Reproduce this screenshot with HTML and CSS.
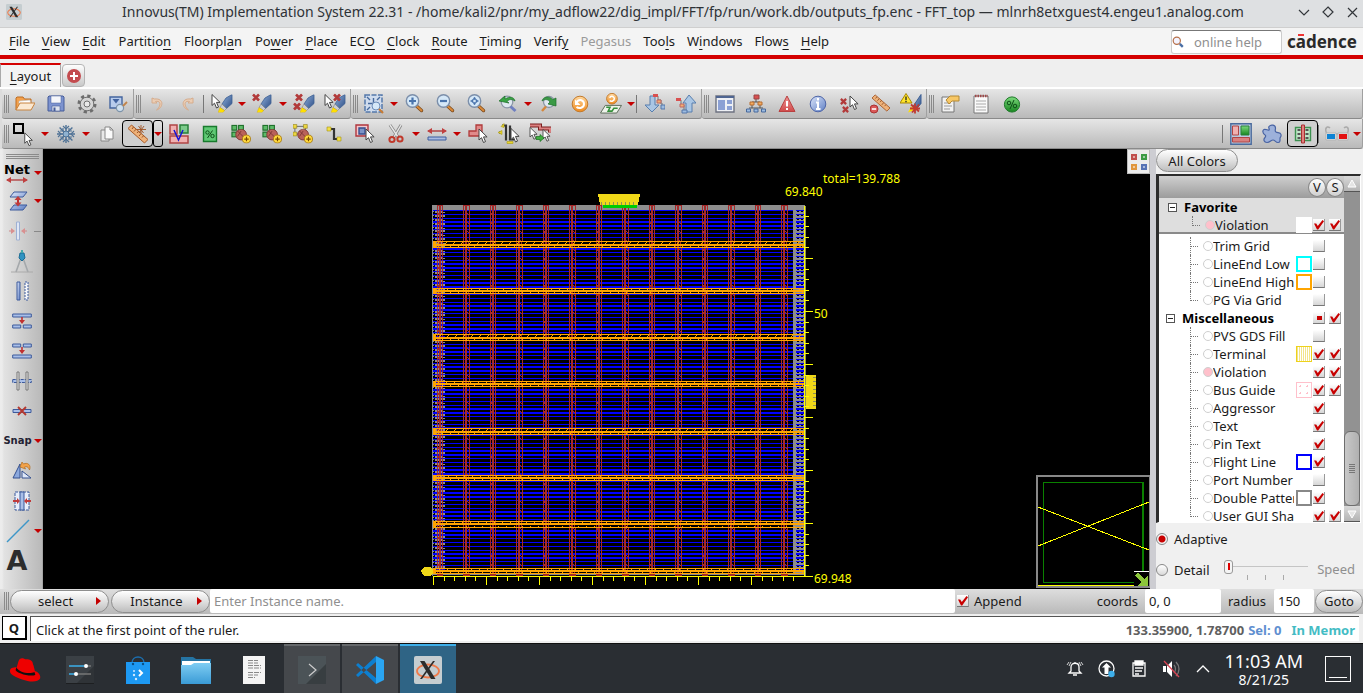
FILE: index.html
```html
<!DOCTYPE html>
<html lang="en">
<head>
<meta charset="utf-8">
<title>Innovus(TM) Implementation System 22.31</title>
<link rel="stylesheet" href="styles.css">
</head>
<body>
<svg class="sprite" aria-hidden="true">
  <defs>
    <linearGradient id="gBlue" x1="0" y1="0" x2="1" y2="1"><stop offset="0" stop-color="#dce6fa"/><stop offset="1" stop-color="#5f7fc4"/></linearGradient>
    <linearGradient id="gPen" x1="0" y1="0" x2="1" y2="1"><stop offset="0" stop-color="#8fb0dc"/><stop offset="1" stop-color="#2f4f86"/></linearGradient>
    <linearGradient id="gOrange" x1="0" y1="0" x2="0" y2="1"><stop offset="0" stop-color="#ffd9a0"/><stop offset="1" stop-color="#f08a1c"/></linearGradient>
    <linearGradient id="gGreen" x1="0" y1="0" x2="0" y2="1"><stop offset="0" stop-color="#7ddb7d"/><stop offset="1" stop-color="#17851f"/></linearGradient>
    <linearGradient id="gRed" x1="0" y1="0" x2="0" y2="1"><stop offset="0" stop-color="#f39a9a"/><stop offset="1" stop-color="#cf4a4a"/></linearGradient>
    <linearGradient id="gFolder" x1="0" y1="0" x2="0" y2="1"><stop offset="0" stop-color="#7fcdf3"/><stop offset="1" stop-color="#3a9bd6"/></linearGradient>
  </defs>
  <symbol id="cur" viewBox="0 0 10 16"><path d="M1 1v11l2.500-2.300 2 4.800 2-.9-2-4.700h3.600z" fill="#fff" stroke="#444"/></symbol>
  <symbol id="x" viewBox="0 0 8 8"><path d="M1 1l6 6M7 1l-6 6" stroke="#b23a3a" stroke-width="2.600"/></symbol>
  <symbol id="pen" viewBox="0 0 15 18"><path d="M14 0v9l-5.500 5L4 9.500l4-6z" fill="url(#gPen)" stroke="#3d5f93" stroke-width=".8"/><path d="M4 9.500l4.500 4.500-2 2-4.500-3z" fill="#c9ccd2" stroke="#777" stroke-width=".5"/><path d="M2 13l4.500 3-1.500 2H0z" fill="#ffe000" stroke="#d6a800" stroke-width=".4"/></symbol>
  <symbol id="mag" viewBox="0 0 20 20"><path d="M11.500 12l5 4.500" stroke="#7c4a1c" stroke-width="3.400" stroke-linecap="round"/><path d="M11.500 12l5 4.500" stroke="#d98a3a" stroke-width="1.800" stroke-linecap="round"/><circle cx="7.500" cy="7" r="6.200" fill="#d5e8f8" stroke="#7c8faa" stroke-width="1.400"/></symbol>
  <symbol id="rul" viewBox="0 0 20 20"><path d="M3.500 1L20 15.500l-3.500 3.500L0 4.500z" fill="#eeb27a" stroke="#a85a28"/><path d="M5.500 3L4 5M8 5.200L6 7.500M10.500 7.300L9 9M13 9.600L11 12M15.500 11.800L14 13.500" stroke="#8c4a20" stroke-width=".9"/></symbol>
  <symbol id="i-open" viewBox="0 0 20 20"><path d="M1 16V4l1-1h6l1.500 2H16v4" fill="#f3a04b" stroke="#bb6c24"/><path d="M4 7l11-1 1 4H4z" fill="#fff" stroke="#bbb" stroke-width=".6"/><path d="M1 16l4-7h15l-4 7z" fill="#fbe9d3" stroke="#c8833e"/></symbol>
  <symbol id="i-save" viewBox="0 0 20 20"><path d="M3 2h14l1 1v14H2V3z" fill="#7d93cf" stroke="#465c99"/><path d="M5 2h10v7H5z" fill="#f5f6fa" stroke="#465c99" stroke-width=".5"/><path d="M6 12h8v5H6z" fill="#dfe4ee" stroke="#465c99" stroke-width=".6"/><path d="M7.500 13.500h2V17h-2z" fill="#465c99"/></symbol>
  <symbol id="i-gear" viewBox="0 0 20 20"><circle cx="10" cy="10" r="8" fill="none" stroke="#6d6d6d" stroke-width="3" stroke-dasharray="3.200 3.083"/><circle cx="10" cy="10" r="6.800" fill="#d6d6d6" stroke="#707070"/><circle cx="10" cy="10" r="3" fill="#e9e9e9" stroke="#707070"/></symbol>
  <symbol id="i-view" viewBox="0 0 20 20"><path d="M2 3h12v11H2z" fill="#b8ccec" stroke="#44659f" stroke-width="1.400"/><path d="M4.500 5h7L8 9.500z" fill="#42639f"/><circle cx="12" cy="14" r="3.600" fill="#cfe0ef" stroke="#7d93a9" stroke-width="1.200"/><path d="M15 12l4-4" stroke="#c2844a" stroke-width="1.800"/></symbol>
  <symbol id="i-undo" viewBox="0 0 20 20"><path d="M5 4v5h5L8.500 7.500c4-1 6 2 3 6.500-1 1.500-2 2-2 2 7-2 8-12-2-11z" fill="#ebcdb4" stroke="#d6ac8c"/></symbol>
  <symbol id="i-redo" viewBox="0 0 20 20"><path d="M15 4v5h-5l1.500-1.500c-4-1-6 2-3 6.500 1 1.500 2 2 2 2-7-2-8-12 2-11z" fill="#ebcdb4" stroke="#d6ac8c"/></symbol>
  <symbol id="i-p1" viewBox="0 0 22 20"><use href="#pen" x="7" y="1" width="15" height="18"/><use href="#cur" x="0" y="0" width="10" height="16"/></symbol>
  <symbol id="i-p2" viewBox="0 0 22 20"><use href="#pen" x="4" y="1" width="17" height="18"/><use href="#x" x="0" y="0" width="8" height="8"/></symbol>
  <symbol id="i-p3" viewBox="0 0 22 20"><use href="#pen" x="7" y="1" width="15" height="18"/><use href="#x" x="2" y="0" width="8" height="8"/><use href="#x" x="0" y="9" width="8" height="8"/></symbol>
  <symbol id="i-p4" viewBox="0 0 22 20"><use href="#pen" x="7" y="1" width="15" height="18"/><use href="#cur" x="0" y="0" width="10" height="16"/><use href="#x" x="9" y="0" width="8" height="8"/></symbol>
  <symbol id="i-fit" viewBox="0 0 20 20"><path d="M1 1h17v17H1z" fill="#cfdcee" stroke="#5478aa" stroke-width="1.500" stroke-dasharray="5 1.500"/><path d="M9.500 4v11M4 9.500h11M3 3l3 3M16 3l-3 3M3 16l3-3" stroke="#46699c" stroke-width="1.400"/><circle cx="12" cy="12" r="4" fill="#d5e8f8" stroke="#6c8cb8"/><path d="M15 15l4 4" stroke="#c97c34" stroke-width="2.200"/></symbol>
  <symbol id="i-zin" viewBox="0 0 20 20"><use href="#mag"/><path d="M7.500 3.500v7M4 7h7" stroke="#4a74ac" stroke-width="2.200"/></symbol>
  <symbol id="i-zout" viewBox="0 0 20 20"><use href="#mag"/><path d="M4 7h7" stroke="#4a74ac" stroke-width="2.200"/></symbol>
  <symbol id="i-zfit" viewBox="0 0 20 20"><use href="#mag"/><path d="M7.500 3L9 5.500H6zM7.500 11L9 8.500H6zM3.500 7L6 5.500v3zM11.500 7L9 5.500v3z" fill="#4a74ac" stroke="#4a74ac" stroke-width=".6"/></symbol>
  <symbol id="i-zprev" viewBox="0 0 20 20"><circle cx="9" cy="8" r="5.800" fill="#dfe8f0" stroke="#8b97a6" stroke-width="1.300"/><path d="M12.500 12.500l5 4.500" stroke="#6f7fc0" stroke-width="3"/><path d="M1 7l6-5v3c5-3 9-2 10 2-3-2-6-2-8 .5l2 1.500z" fill="#3aa545" stroke="#1d6d28" stroke-width=".7"/></symbol>
  <symbol id="i-znext" viewBox="0 0 20 20"><circle cx="10" cy="8" r="5.500" fill="#dfe8f0" stroke="#8b97a6" stroke-width="1.300"/><path d="M7 12.500l-4 4.500" stroke="#d4873c" stroke-width="2.400"/><path d="M17 12V4l-3 1.500C9 1 4 3 3 7c3-2 6-2 8 1l-2 2z" fill="#3a9a45" stroke="#1d6d28" stroke-width=".7"/></symbol>
  <symbol id="i-refresh" viewBox="0 0 20 20"><circle cx="10" cy="10" r="7.800" fill="url(#gOrange)" stroke="#c27a2c"/><path d="M6.500 8c3-3.500 7.500-2 7.500 2s-5 5-7.500 3" fill="none" stroke="#fff" stroke-width="2"/><path d="M5 5.500v5.500h5.500z" fill="#fff"/></symbol>
  <symbol id="i-redraw" viewBox="0 0 22 22"><circle cx="12" cy="6" r="5.600" fill="url(#gOrange)" stroke="#c27a2c"/><path d="M9.500 5c2-3 5-1 5 1s-3 3.500-5 2" fill="none" stroke="#fff" stroke-width="1.600"/><path d="M5 13h17l-5 8H0z" fill="#eef3ea" stroke="#5b6b58"/><path d="M6 15h4l-2 4h4l2-3h4" fill="none" stroke="#35903b" stroke-width="1.600"/></symbol>
  <symbol id="i-down" viewBox="0 0 20 20"><path d="M5 2h5v9h4l-7 7-7-7h5z" fill="#aac6e4" stroke="#587fae"/><path d="M10 2h3v4h3v4h2" fill="none" stroke="#777"/><path d="M8 0h5v3H8z" fill="#d95050"/><path d="M12 6h4v3h-4z" fill="#f4b070" stroke="#b66"/><path d="M16 11h4v4h-4z" fill="#9dbce0" stroke="#57a"/></symbol>
  <symbol id="i-up" viewBox="0 0 20 20"><path d="M10 18v-9H7l6-8 7 8h-4v9z" fill="#aac6e4" stroke="#587fae"/><path d="M2 6h3v5h3v6h2" fill="none" stroke="#777"/><path d="M0 4h5v3H0z" fill="#d95050"/><path d="M4 10h4v3H4z" fill="#f4b070" stroke="#b66"/><path d="M6 16h5v3H6z" fill="#9dbce0" stroke="#57a"/></symbol>
  <symbol id="i-panel" viewBox="0 0 20 20"><path d="M1 2h18v16H1z" fill="#eef0f5" stroke="#6d7280" stroke-width="1.400"/><path d="M1 2h18v2H1z" fill="#4f6591"/><path d="M3 6h7v10H3zM12 6h5v4h-5zM12 12h5v4h-5z" fill="#8ba0d4"/></symbol>
  <symbol id="i-tree" viewBox="0 0 20 20"><path d="M10 3v5M6 8h8M6 8v6M14 8v6M3 14h14" stroke="#555" fill="none"/><path d="M8 1h5v4H8z" fill="#d95050" stroke="#944"/><path d="M4 8h4v3H4zM12 8h4v3h-4z" fill="#f4ac60" stroke="#b66c30"/><path d="M.5 15h4v3h-4zM8 15h4v3H8zM15.500 15h4v3h-4z" fill="#9dbce0" stroke="#46699c"/></symbol>
  <symbol id="i-warn" viewBox="0 0 20 20"><path d="M10 2l8 15.500H2z" fill="url(#gRed)" stroke="#b84040" stroke-linejoin="round"/><path d="M10 7v5.500M10 14v2" stroke="#fff" stroke-width="2"/></symbol>
  <symbol id="i-info" viewBox="0 0 20 20"><circle cx="10" cy="10" r="7.800" fill="url(#gBlue)" stroke="#4f66a8"/><path d="M10 4v2.500M8 8.500h2V15M8 15h4.500" stroke="#fff" stroke-width="2" fill="none"/></symbol>
  <symbol id="i-xcur" viewBox="0 0 20 20"><use href="#x" x="1" y="4" width="7" height="7"/><use href="#x" x="3" y="12" width="7" height="7"/><use href="#cur" x="10" y="1" width="10" height="16"/></symbol>
  <symbol id="i-rmrul" viewBox="0 0 20 20"><use href="#rul" x="2" y="0" width="18" height="18"/><circle cx="4" cy="15" r="4" fill="#d95858" stroke="#a33"/><path d="M1.800 15h4.400" stroke="#fff" stroke-width="1.600"/></symbol>
  <symbol id="i-warnpen" viewBox="0 0 22 20"><path d="M21 1v9l-5 6-3-3z" fill="url(#gPen)" stroke="#3d5f93"/><path d="M8 19l3-6 5 3z" fill="#ffe000"/><path d="M6 0l6 9.500H0z" fill="#ffe52c" stroke="#a98700"/><path d="M6 3v3.500M6 7.300v1.400" stroke="#222" stroke-width="1.300"/><path d="M11 11l8 7M19 11l-7 8M15 10v10M10 15h10" stroke="#c03a32" stroke-width="1.800"/></symbol>
  <symbol id="i-form" viewBox="0 0 20 20"><path d="M2 3h12v15H2z" fill="#f2f2f2" stroke="#777"/><path d="M4 9h7M4 12h8M4 15h6" stroke="#999"/><path d="M6 6l4-4h9v5h-7l-3 3z" fill="#f7c765" stroke="#b58a34"/></symbol>
  <symbol id="i-note" viewBox="0 0 20 20"><path d="M3 2h14v17H3z" fill="#fafafa" stroke="#777"/><path d="M5 7h10M5 10h10M5 13h10M5 16h10" stroke="#aaa"/><path d="M4 2h13" stroke="#a04848" stroke-width="2.500" stroke-dasharray="1.500 1"/></symbol>
  <symbol id="i-pct" viewBox="0 0 20 20"><circle cx="10" cy="10.500" r="7.600" fill="url(#gGreen)" stroke="#1d7a28"/><circle cx="7" cy="9" r="1.800" fill="none" stroke="#0e4d18"/><circle cx="13" cy="12" r="1.800" fill="none" stroke="#0e4d18"/><path d="M12 6l-4 9" stroke="#0e4d18"/></symbol>
  <symbol id="i-sel" viewBox="0 0 22 26"><path d="M2 3h9v9H2z" fill="none" stroke="#000" stroke-width="2"/><use href="#cur" x="11" y="11" width="11" height="15"/></symbol>
  <symbol id="i-snow" viewBox="0 0 20 20"><path d="M10 1v18M1 10h18M3.600 3.600l12.800 12.800M16.400 3.600L3.600 16.400" stroke="#4f7296" stroke-width="1.400"/><path d="M7 2l3 3 3-3M7 18l3-3 3 3M2 7l3 3-3 3M18 7l-3 3 3 3M4 7l3 0 0-3M13 4v3h3M4 13h3v3M16 13h-3v3" fill="none" stroke="#4f7296" stroke-width="1.200"/><circle cx="10" cy="10" r="3" fill="#8fb2d0" stroke="#4f7296"/></symbol>
  <symbol id="i-copy" viewBox="0 0 20 20"><path d="M4 6h8v11H4z" fill="#e8e8e8" stroke="#888"/><path d="M8 3h5l3 3v9H8z" fill="#fafafa" stroke="#888"/><path d="M13 3v3h3" fill="none" stroke="#888"/></symbol>
  <symbol id="i-ruler" viewBox="0 0 20 20"><use href="#rul"/><path d="M13 1v8M9 5.500h9M10.500 2l5 7M16 2l-5 7" stroke="#9e5224" stroke-width=".9"/></symbol>
  <symbol id="i-vdrc" viewBox="0 0 20 20"><path d="M1 1h7v9H1z" fill="#f0b0b0" stroke="#b04545" stroke-width="1.500"/><path d="M11 1h8v8h-8z" fill="#7dcb8b" stroke="#28803a" stroke-width="1.500"/><path d="M1 12h18v7H1z" fill="#f0b0b0" stroke="#b04545" stroke-width="1.500"/><path d="M5 6l4.500 10L14 6" fill="none" stroke="#1313d8" stroke-width="1.500"/></symbol>
  <symbol id="i-pctsq" viewBox="0 0 20 20"><path d="M3.500 2.500h13v15h-13z" fill="#5fc974" stroke="#187a2d" stroke-width="1.400"/><circle cx="7.500" cy="8.500" r="1.700" fill="none" stroke="#0e4d18"/><circle cx="12.500" cy="12" r="1.700" fill="none" stroke="#0e4d18"/><path d="M12.500 6.500l-5 7.500" stroke="#0e4d18"/></symbol>
  <symbol id="plus" viewBox="0 0 18 16"><circle cx="7" cy="6" r="6" fill="#b9625a" stroke="#7e3434"/><path d="M3 2l8 8M3 8l4-6" stroke="#7e3434"/><circle cx="13" cy="11" r="4.500" fill="#ffd93d" stroke="#a87a10"/><path d="M13 8.500v5M10.500 11h5" stroke="#7a4a00" stroke-width="1.300"/></symbol>
  <symbol id="sq4" viewBox="0 0 14 14"><path d="M1 1h5v5H1zM8 1h5v5H8zM1 8h5v5H1zM8 8h5v5H8z" fill="#5dbb68" stroke="#20702c" stroke-width="1.200"/></symbol>
  <symbol id="i-g1" viewBox="0 0 21 20"><use href="#sq4" width="14" height="14"/><use href="#plus" x="4" y="5" width="17" height="15"/></symbol>
  <symbol id="i-g2" viewBox="0 0 21 20"><path d="M2 2h11v8H2z" fill="none" stroke="#666"/><path d="M0 0h4v4H0zM11 0h4v4h-4zM0 8h4v4H0z" fill="#ecd640" stroke="#8d7d1b" stroke-width=".6"/><use href="#plus" x="4" y="5" width="17" height="15"/></symbol>
  <symbol id="i-route" viewBox="0 0 20 20"><path d="M5 5h5v10h5" fill="none" stroke="#333" stroke-width="2.200"/><path d="M3 3h4v4H3zM13 13h4v4h-4z" fill="#f3e047" stroke="#a39217" stroke-width=".6"/></symbol>
  <symbol id="i-selbox" viewBox="0 0 20 20"><path d="M1 1h12v11H1z" fill="#f3c7cb" stroke="#b0353d" stroke-width="1.400"/><path d="M4 4h6v6H4z" fill="#7d93c7" stroke="#354f8f" stroke-width="1.400"/><use href="#cur" x="10" y="4" width="10" height="16"/></symbol>
  <symbol id="i-cut" viewBox="0 0 20 20"><path d="M4 1l8 12M15 1L8 13" stroke="#888" stroke-width="3"/><path d="M4 1l8 12M15 1L8 13" stroke="#e6e6e6" stroke-width="1.400"/><circle cx="6" cy="15.500" r="2.600" fill="none" stroke="#c0392b" stroke-width="2"/><circle cx="14" cy="15" r="2.600" fill="none" stroke="#c0392b" stroke-width="2"/></symbol>
  <symbol id="i-stretch" viewBox="0 0 20 20"><path d="M1 7h18" stroke="#b03a3a" stroke-width="1.400"/><path d="M0 7l5-3v6zM20 7l-5-3v6z" fill="#c04040"/><path d="M1 13h18v3H1z" fill="#a9bbe2" stroke="#3d5fa0"/></symbol>
  <symbol id="i-shape" viewBox="0 0 20 20"><path d="M8 1h6v11H1V7h7z" fill="#e08a8a" stroke="#b03a3a" stroke-width="1.300"/><use href="#cur" x="10" y="4" width="10" height="16"/></symbol>
  <symbol id="i-wires" viewBox="0 0 22 20"><path d="M4 2h4v15M12 2v14h4M1 9h3" fill="none" stroke="#333" stroke-width="2.200"/><path d="M3 3l3-3v4zM0 9l4-2v4zM9 18h6v2H9z" fill="#ead52e" stroke="#a89a14" stroke-width=".6"/><use href="#cur" x="12" y="4" width="10" height="16"/></symbol>
  <symbol id="i-swap" viewBox="0 0 22 20"><path d="M1 2h10v3h10v4" fill="none" stroke="#7c1f1f" stroke-width="4"/><path d="M1 2h10v3h10v4" fill="none" stroke="#db8080" stroke-width="2"/><use href="#cur" x="0" y="3" width="9" height="14"/><use href="#cur" x="13" y="5" width="9" height="14"/><path d="M7 13h4v-2l4 3.500-4 3.500v-2H7z" fill="#3fae3f" stroke="#1a6e20" stroke-width=".7"/></symbol>
  <symbol id="i-fp" viewBox="0 0 24 24"><path d="M1.800 1.800h20.400v20.400H1.800z" fill="#b9cbe0" stroke="#4a6a9c" stroke-width="1.400"/><path d="M3.500 4h6v9h-6z" fill="#f0b0b0" stroke="#b04545"/><path d="M12 4h8v9h-8z" fill="url(#gGreen)" stroke="#28803a"/><path d="M3.500 15.500h17V20h-17z" fill="#d98080" stroke="#b04545"/></symbol>
  <symbol id="i-amoeba" viewBox="0 0 20 20"><path d="M7 2.500c2-2.500 6.500-1.500 6.500 1.500 0 2-1 3 .5 4s4.500 0 5 2.500-1 2.500-1 4 .5 4-2 4-3-2.500-5-2.500-3 2.500-6 2.500-4-3-2-5c1-1.200 1-2-.5-3S0 6.500 2 5.500 6 7 7 6s-1-2 0-3.500z" fill="#9db1da" stroke="#4863a3" stroke-width="1.200"/></symbol>
  <symbol id="i-phys" viewBox="0 0 20 20"><path d="M2.500 3.500h15v13h-15z" fill="#bfe5c7" stroke="#3d9150" stroke-width="1.400"/><path d="M4.500 6h3M4.500 10h3M4.500 14h3M12.500 6h3M12.500 10h3M12.500 14h3" stroke="#555" stroke-width="2"/><path d="M8.500 1h3v18h-3z" fill="#e08080" stroke="#a83030"/></symbol>
  <symbol id="i-3d" viewBox="0 0 24 16"><path d="M1 2c-1 4 1 5 1 6h20c0-1 2-2 1-6M5 2C3 0 1 1 1 3M19 2c2-2 4-1 4 1" fill="none" stroke="#aaa" stroke-width="1.500"/><path d="M1 7h10v7H1zM13 7h10v7H13z" fill="#eee" stroke="#b3b3b3"/><path d="M2 8h8v5H2z" fill="#0d83d4"/><path d="M14 8h8v5h-8z" fill="#e31111"/></symbol>
  <symbol id="dar" viewBox="0 0 22 6"><path d="M1 3h20" stroke="#b03a3a" stroke-width="1.300"/><path d="M0 3l5-3v6zM22 3l-5-3v6z" fill="#c04040"/></symbol>
  <symbol id="i-layer" viewBox="0 0 20 20"><path d="M6 1h13l-4 5H2zM6 14h13l-4 5H2z" fill="url(#gBlue)" stroke="#3d5a9c"/><path d="M10 8v5" stroke="#c03030" stroke-width="2"/><path d="M10 5l3.500 4h-7zM10 15.500l3.500-4h-7z" fill="#c03a3a"/></symbol>
  <symbol id="i-merge" viewBox="0 0 20 20"><path d="M8.500 1h3v18h-3z" fill="#dfe7f5" stroke="#9db0d4"/><path d="M1 10h3M16 10h3" stroke="#c88"/><path d="M3 7l4 3-4 3zM17 7l-4 3 4 3z" fill="#d99090"/></symbol>
  <symbol id="i-compass" viewBox="0 0 22 24"><path d="M10 9L5 23M12 9l5 14" stroke="#a4a8ab" stroke-width="1.600"/><path d="M0 23h22" stroke="#aaa"/><path d="M9 4h4l1 5-3 3-3-3z" fill="#2f93c2" stroke="#1c6c94"/><path d="M10 1h2v3h-2z" fill="#4aa"/></symbol>
  <symbol id="i-bars" viewBox="0 0 20 20"><path d="M5 1h3v18H5z" fill="url(#gBlue)" stroke="#3d5a9c"/><path d="M13 1h3v18h-3z" fill="#f5f7fb" stroke="#3d5a9c" stroke-dasharray="2 1"/></symbol>
  <symbol id="i-split" viewBox="0 0 20 18"><path d="M.7 2h18.600v3H.7zM.7 13h8v3h-8zM11.300 13h8v3h-8z" fill="#a9bfe8" stroke="#3d5a9c"/><path d="M10 5v4" stroke="#c03030" stroke-width="1.600"/><path d="M10 12L7 8h6z" fill="#c03030"/></symbol>
  <symbol id="i-join" viewBox="0 0 20 18"><path d="M.7 2h8v3h-8zM11.300 2h8v3h-8zM.7 13h18.600v3H.7z" fill="#a9bfe8" stroke="#3d5a9c"/><path d="M10 5v4" stroke="#c03030" stroke-width="1.600"/><path d="M10 12L7 8h6z" fill="#c03030"/></symbol>
  <symbol id="i-cross" viewBox="0 0 20 20"><path d="M.7 8.500h18.600v3H.7z" fill="#a9bfe8" stroke="#3d5a9c" stroke-dasharray="3 1"/><path d="M5 1h2v18H5zM14 1h2v18h-2z" fill="#e8e8e8" stroke="#777"/></symbol>
  <symbol id="i-del" viewBox="0 0 20 20"><path d="M1 8.500h18v3H1z" fill="#a9bfe8" stroke="#3d5a9c"/><path d="M6 6l8 8M14 6l-8 8" stroke="#b5382f" stroke-width="1.800"/></symbol>
  <symbol id="i-rot" viewBox="0 0 20 20"><path d="M1 17L8 3v14z" fill="#8ba8dd" stroke="#34508f"/><path d="M10 10v7h9z" fill="#dfe8f8" stroke="#34508f"/><path d="M8 6l2-5 1.500 2c4-2 8 1 6 6-1-3-3-4-5-3l1 2z" fill="#f2a24a" stroke="#b06c20" stroke-width=".7"/></symbol>
  <symbol id="i-align" viewBox="0 0 20 20"><path d="M3 1h14v18H3z" fill="#e8eefa" stroke="#3d5a9c" stroke-dasharray="3 1"/><path d="M8 1h4v18H8z" fill="#a9bfe8" stroke="#3d5a9c"/><path d="M5 7l3 3-3 3zM15 7l-3 3 3 3zM1 9h4v2H1zM15 9h4v2h-4z" fill="#c03a3a"/></symbol>
  <symbol id="i-line" viewBox="0 0 24 24"><path d="M1 23L23 1" stroke="#3c96c8" stroke-width="1.500"/></symbol>
  <symbol id="i-x11" viewBox="0 0 28 28"><rect width="28" height="28" rx="2" fill="#c5cdd0"/><ellipse cx="14" cy="15" rx="11" ry="6.500" fill="none" stroke="#ef7a4a" stroke-width="1.800"/><path d="M6 5h4.500l11 18H17z" fill="#2c2c2c"/><path d="M21 5h-2L6 23h2z" fill="#2c2c2c"/></symbol>
</svg>

<header class="titlebar">
  <svg class="titlebar__icon"><use href="#i-x11"/></svg>
  <h1 class="titlebar__text">Innovus(TM) Implementation System 22.31 - /home/kali2/pnr/my_adflow22/dig_impl/FFT/fp/run/work.db/outputs_fp.enc - FFT_top — mlnrh8etxguest4.engeu1.analog.com</h1>
  <div class="titlebar__controls">
    <button aria-label="Minimize"><svg viewBox="0 0 12 12"><path d="M1 4l5 5 5-5"/></svg></button>
    <button aria-label="Maximize"><svg viewBox="0 0 12 12"><path d="M6 1l5 5-5 5-5-5z"/></svg></button>
    <button aria-label="Close"><svg viewBox="0 0 12 12"><path d="M2 2l9 9M11 2l-9 9"/></svg></button>
  </div>
</header>

<nav class="menubar">
  <div class="menubar__items">
    <button><u>F</u>ile</button><button><u>V</u>iew</button><button><u>E</u>dit</button><button>Partitio<u>n</u></button><button>Floorpl<u>a</u>n</button><button>Po<u>w</u>er</button><button><u>P</u>lace</button><button>EC<u>O</u></button><button><u>C</u>lock</button><button><u>R</u>oute</button><button><u>T</u>iming</button><button>Verif<u>y</u></button><button disabled>Pegasus</button><button>Too<u>l</u>s</button><button>W<u>i</u>ndows</button><button>Flow<u>s</u></button><button><u>H</u>elp</button>
  </div>
  <div class="help">
    <svg viewBox="0 0 20 20"><path d="M13 13l5 5" stroke="#4a6fa5" stroke-width="4"/><circle cx="8" cy="8" r="6" fill="#f3f3ff" stroke="#b5704a" stroke-width="2"/></svg>
    <input type="text" placeholder="online help" aria-label="online help">
  </div>
  <div class="brand">c<span class="brand__a">a</span>dence</div>
</nav>

<div class="tabs">
  <button class="tabs__tab"><u>L</u>ayout</button>
  <button class="tabs__add" aria-label="Add tab"><svg viewBox="0 0 14 14"><circle cx="7" cy="7" r="7" fill="#c34b4f"/><path d="M7 3v8M3 7h8" stroke="#fff" stroke-width="2"/></svg></button>
</div>

<div class="toolbar">
  <div class="group"><i class="grip"></i>
    <button class="tool" aria-label="Open"><svg><use href="#i-open"/></svg></button><button class="tool" aria-label="Save"><svg><use href="#i-save"/></svg></button><button class="tool" aria-label="Preferences"><svg><use href="#i-gear"/></svg></button><button class="tool" aria-label="View"><svg><use href="#i-view"/></svg></button>
  </div>
  <div class="group"><i class="grip"></i>
    <button class="tool" aria-label="Undo"><svg><use href="#i-undo"/></svg></button><button class="tool" aria-label="Redo"><svg><use href="#i-redo"/></svg></button><i class="sep"></i><button class="tool tool--wide" aria-label="Highlight"><svg><use href="#i-p1"/></svg></button><button class="drop" aria-label="Highlight options"></button><button class="tool tool--wide" aria-label="Clear highlight"><svg><use href="#i-p2"/></svg></button><button class="drop" aria-label="Clear options"></button><button class="tool tool--wide" aria-label="Clear all"><svg><use href="#i-p3"/></svg></button><button class="tool tool--wide" aria-label="Clear selected"><svg><use href="#i-p4"/></svg></button>
  </div>
  <div class="group"><i class="grip"></i>
    <button class="tool" aria-label="Fit"><svg><use href="#i-fit"/></svg></button><button class="drop" aria-label="Fit options"></button><button class="tool" aria-label="Zoom in"><svg><use href="#i-zin"/></svg></button><button class="tool" aria-label="Zoom out"><svg><use href="#i-zout"/></svg></button><button class="tool" aria-label="Zoom selected"><svg><use href="#i-zfit"/></svg></button><button class="tool" aria-label="Previous view"><svg><use href="#i-zprev"/></svg></button><button class="drop" aria-label="View history"></button><button class="tool" aria-label="Next view"><svg><use href="#i-znext"/></svg></button><button class="tool" aria-label="Refresh"><svg><use href="#i-refresh"/></svg></button><button class="tool tool--wide" aria-label="Redraw"><svg><use href="#i-redraw"/></svg></button><button class="drop" aria-label="Redraw options"></button><i class="sep"></i><button class="tool" aria-label="Descend"><svg><use href="#i-down"/></svg></button><button class="tool" aria-label="Ascend"><svg><use href="#i-up"/></svg></button>
  </div>
  <div class="group"><i class="grip"></i>
    <button class="tool" aria-label="Panels"><svg><use href="#i-panel"/></svg></button><button class="tool" aria-label="Design browser"><svg><use href="#i-tree"/></svg></button><button class="tool" aria-label="Violations"><svg><use href="#i-warn"/></svg></button><button class="tool" aria-label="Attributes"><svg><use href="#i-info"/></svg></button><button class="tool" aria-label="Deselect"><svg><use href="#i-xcur"/></svg></button><button class="tool" aria-label="Clear rulers"><svg><use href="#i-rmrul"/></svg></button><button class="tool tool--wide" aria-label="Clear violations"><svg><use href="#i-warnpen"/></svg></button>
  </div>
  <div class="group group--fill"><i class="grip"></i>
    <button class="tool" aria-label="Summary"><svg><use href="#i-form"/></svg></button><button class="tool" aria-label="Report"><svg><use href="#i-note"/></svg></button><button class="tool" aria-label="Density"><svg><use href="#i-pct"/></svg></button>
  </div>
</div>

<div class="toolbar">
  <div class="group group--fill"><i class="grip"></i>
    <button class="tool tool--sel" aria-label="Select"><svg><use href="#i-sel"/></svg></button><button class="drop" aria-label="Select options"></button><button class="tool" aria-label="Move"><svg><use href="#i-snow"/></svg></button><button class="drop" aria-label="Move options"></button><button class="tool" aria-label="Copy"><svg><use href="#i-copy"/></svg></button><button class="tool tool--on" aria-label="Ruler"><svg><use href="#i-ruler"/></svg></button><button class="drop drop--on" aria-label="Ruler options"></button><button class="tool" aria-label="Check"><svg><use href="#i-vdrc"/></svg></button><button class="tool" aria-label="Utilization"><svg><use href="#i-pctsq"/></svg></button><button class="tool" aria-label="Create guide"><svg><use href="#i-g1"/></svg></button><button class="tool" aria-label="Create region"><svg><use href="#i-g1"/></svg></button><button class="tool" aria-label="Create fence"><svg><use href="#i-g2"/></svg></button><button class="tool" aria-label="Add wire"><svg><use href="#i-route"/></svg></button><button class="tool" aria-label="Select box"><svg><use href="#i-selbox"/></svg></button><button class="tool" aria-label="Cut"><svg><use href="#i-cut"/></svg></button><button class="drop" aria-label="Cut options"></button><button class="tool" aria-label="Stretch"><svg><use href="#i-stretch"/></svg></button><button class="drop" aria-label="Stretch options"></button><button class="tool" aria-label="Reshape"><svg><use href="#i-shape"/></svg></button><button class="tool tool--wide" aria-label="Edit route"><svg><use href="#i-wires"/></svg></button><button class="tool tool--wide" aria-label="Swap"><svg><use href="#i-swap"/></svg></button>
    <span class="spring"></span>
    <i class="sep"></i><button class="tool tool--big" aria-label="Floorplan view"><svg><use href="#i-fp"/></svg></button><button class="tool" aria-label="Amoeba view"><svg><use href="#i-amoeba"/></svg></button><button class="tool tool--on" aria-label="Physical view"><svg><use href="#i-phys"/></svg></button><i class="sep"></i><button class="tool tool--big" aria-label="3D view"><svg><use href="#i-3d"/></svg></button><button class="drop" aria-label="3D options"></button>
  </div>
</div>

<main class="work">
  <aside class="side">
    <i class="side__grip"></i>
    <div class="side__row side__row--first"><button class="side__net">Net<svg><use href="#dar"/></svg></button><button class="drop" aria-label="Net options"></button></div>
    <div class="side__row"><button class="tool" aria-label="Layer"><svg><use href="#i-layer"/></svg></button><button class="drop" aria-label="Layer options"></button></div>
    <div class="side__row"><button class="tool" aria-label="Merge"><svg><use href="#i-merge"/></svg></button><button class="drop drop--off" aria-label="Merge options"></button></div>
    <div class="side__row side__row--in"><button class="tool tool--big" aria-label="Compass"><svg><use href="#i-compass"/></svg></button></div>
    <div class="side__row side__row--in"><button class="tool" aria-label="Duplicate"><svg><use href="#i-bars"/></svg></button></div>
    <div class="side__row side__row--in"><button class="tool" aria-label="Split"><svg><use href="#i-split"/></svg></button></div>
    <div class="side__row side__row--in"><button class="tool" aria-label="Join"><svg><use href="#i-join"/></svg></button></div>
    <div class="side__row side__row--in"><button class="tool" aria-label="Trim"><svg><use href="#i-cross"/></svg></button></div>
    <div class="side__row side__row--in"><button class="tool" aria-label="Delete"><svg><use href="#i-del"/></svg></button></div>
    <div class="side__row"><button class="side__snap">Snap</button><button class="drop" aria-label="Snap options"></button></div>
    <div class="side__row side__row--in"><button class="tool" aria-label="Rotate"><svg><use href="#i-rot"/></svg></button></div>
    <div class="side__row side__row--in"><button class="tool" aria-label="Align"><svg><use href="#i-align"/></svg></button></div>
    <div class="side__row"><button class="tool tool--big" aria-label="Line"><svg><use href="#i-line"/></svg></button><button class="drop" aria-label="Line options"></button></div>
    <div class="side__row"><button class="side__text">A</button></div>
  </aside>

  <section class="canvas" aria-label="Layout canvas">
    <svg class="canvas__die" id="die"></svg>
    <button class="canvas__palette" aria-label="Palette"><svg viewBox="0 0 18 18"><path d="M1 1h6v6H1z" fill="#c0504d"/><path d="M11 1h6v6h-6z" fill="#3c9a44"/><path d="M1 11h6v6H1z" fill="#e0963c"/><path d="M11 11h6v6h-6z" fill="#5673b5"/><path d="M3 3h2v2H3zM13 3h2v2h-2zM3 13h2v2H3zM13 13h2v2h-2z" fill="#fff" opacity=".5"/></svg></button>
    <div class="minimap">
      <svg viewBox="0 0 111 109" shape-rendering="crispEdges"><path d="M5.500 5.500h100v100H5.500z" fill="none" stroke="#0a8000"/><path d="M105 5v101" stroke="#0a8000" stroke-width="2"/><path d="M0 30l111 43M0 69L111 25M0 108.500h97" stroke="#ff0" fill="none"/><path d="M96 94h15v15H96z" fill="#000"/><path d="M96 94.500h15" stroke="#fff"/><path d="M97 98l3-2 6 6 4-4v11H99l4-4z" fill="#8cc63a"/></svg>
    </div>
  </section>

  <aside class="panel">
    <button class="pill panel__all">All Colors</button>
    <div class="list">
      <div class="list__main">
        <div class="list__head"><button>V</button><button>S</button></div>
        <ul class="tree tree--fav">
          <li class="row row--top"><i class="box"></i><b>Favorite</b></li>
          <li class="row row--end"><i class="dot dot--pink"></i><span class="name">Violation</span><i class="sw sw--white"></i><input type="checkbox" checked aria-label="Favorite Violation visible"><input type="checkbox" checked aria-label="Favorite Violation selectable"></li>
        </ul>
        <ul class="tree">
          <li class="row"><i class="dot"></i><span class="name">Trim Grid</span><i class="sw"></i><input type="checkbox" aria-label="Trim Grid visible"></li>
          <li class="row"><i class="dot"></i><span class="name">LineEnd Low</span><i class="sw sw--cyan"></i><input type="checkbox" aria-label="LineEnd Low visible"></li>
          <li class="row"><i class="dot"></i><span class="name">LineEnd High</span><i class="sw sw--orange"></i><input type="checkbox" aria-label="LineEnd High visible"></li>
          <li class="row row--end"><i class="dot"></i><span class="name">PG Via Grid</span><i class="sw"></i><input type="checkbox" aria-label="PG Via Grid visible"></li>
          <li class="row row--top"><i class="box"></i><b>Miscellaneous</b><input type="checkbox" class="partial" aria-label="Miscellaneous visible"><input type="checkbox" checked aria-label="Miscellaneous selectable"></li>
          <li class="row"><i class="dot"></i><span class="name">PVS GDS Fill</span><i class="sw"></i><input type="checkbox" aria-label="PVS GDS Fill visible"></li>
          <li class="row"><i class="dot"></i><span class="name">Terminal</span><i class="sw sw--hatch"></i><input type="checkbox" checked aria-label="Terminal visible"><input type="checkbox" checked aria-label="Terminal selectable"></li>
          <li class="row"><i class="dot dot--pink"></i><span class="name">Violation</span><i class="sw"></i><input type="checkbox" checked aria-label="Violation visible"><input type="checkbox" checked aria-label="Violation selectable"></li>
          <li class="row"><i class="dot"></i><span class="name">Bus Guide</span><i class="sw sw--pink"></i><input type="checkbox" checked aria-label="Bus Guide visible"><input type="checkbox" checked aria-label="Bus Guide selectable"></li>
          <li class="row"><i class="dot"></i><span class="name">Aggressor</span><i class="sw"></i><input type="checkbox" checked aria-label="Aggressor visible"></li>
          <li class="row"><i class="dot"></i><span class="name">Text</span><i class="sw"></i><input type="checkbox" checked aria-label="Text visible"></li>
          <li class="row"><i class="dot"></i><span class="name">Pin Text</span><i class="sw"></i><input type="checkbox" checked aria-label="Pin Text visible"></li>
          <li class="row"><i class="dot"></i><span class="name">Flight Line</span><i class="sw sw--blue"></i><input type="checkbox" checked aria-label="Flight Line visible"></li>
          <li class="row"><i class="dot"></i><span class="name">Port Number</span><i class="sw"></i><input type="checkbox" aria-label="Port Number visible"></li>
          <li class="row"><i class="dot"></i><span class="name">Double Patter</span><i class="sw sw--gray"></i><input type="checkbox" checked aria-label="Double Pattern visible"></li>
          <li class="row row--end"><i class="dot"></i><span class="name">User GUI Sha</span><i class="sw"></i><input type="checkbox" checked aria-label="User GUI Shape visible"><input type="checkbox" checked aria-label="User GUI Shape selectable"></li>
        </ul>
      </div>
      <div class="scroll">
        <button class="scroll__btn" aria-label="Scroll up"><svg viewBox="0 0 14 14"><path d="M7 3l4 7H3z"/></svg></button>
        <div class="scroll__track"><div class="scroll__thumb"></div></div>
        <button class="scroll__btn" aria-label="Scroll down"><svg viewBox="0 0 14 14"><path d="M7 11l4-7H3z"/></svg></button>
      </div>
    </div>
    <label class="radio"><input type="radio" name="mode" checked>Adaptive</label>
    <div class="speed">
      <label class="radio"><input type="radio" name="mode">Detail</label>
      <div class="speed__slide"><input type="range" id="speed" min="0" max="4" value="0"><div class="speed__ticks"><i></i><i></i><i></i></div></div>
      <label class="speed__label" for="speed">Speed</label>
    </div>
  </aside>
</main>

<form class="cmd">
  <i class="grip"></i>
  <button type="button" class="pill pill--menu"><span>select</span><i></i></button>
  <button type="button" class="pill pill--menu"><span>Instance</span><i></i></button>
  <input class="field field--grow" type="text" placeholder="Enter Instance name." aria-label="Instance name">
  <label class="cmd__append"><input type="checkbox" checked>Append</label>
  <label for="coords">coords</label><input class="field field--coords" id="coords" type="text" value="0, 0">
  <label for="radius">radius</label><input class="field field--radius" id="radius" type="text" value="150">
  <button type="button" class="pill cmd__goto">Goto</button>
</form>

<div class="status">
  <button class="status__q">Q</button>
  <div class="status__box"><span>Click at the first point of the ruler.</span><span class="status__right"><b>133.35900, 1.78700</b><b class="status__sel">Sel: 0</b><b class="status__mem">In Memor</b></span></div>
</div>

<footer class="taskbar">
  <button class="task" aria-label="Launcher"><svg viewBox="0 0 34 28"><path d="M1 15c0-3 3-4 7-4l3 4 15 4 2-4c4 2 6 5 5 8-2 4-11 4-19 1S1 19 1 15z" fill="#e00"/><path d="M8 12l2-7c1-3 3-4 6-3 2 1 3 0 6 1s3 3 4 6l2 8c-3 6-20 0-20-5z" fill="#e00"/><path d="M8 11c1 5 14 8 19 5l1 3C23 22 7 17 7 14z" fill="#111"/></svg></button>
  <button class="task" aria-label="Settings"><svg viewBox="0 0 28 28"><path d="M0 0h28v28H0z" fill="#3b4045"/><path d="M28 10v18H10z" fill="#2f3337"/><path d="M0 27.500h28" stroke="#1d1f21"/><path d="M3 10h15M3 18h7" stroke="#3daee9" stroke-width="1.500"/><path d="M20 10h5M11 18h14" stroke="#777" stroke-width="1.500"/><circle cx="20" cy="10" r="2" fill="#fff"/><circle cx="10" cy="18" r="2" fill="#fff"/></svg></button>
  <button class="task" aria-label="Discover"><svg viewBox="0 0 28 28"><path d="M8 7c0-8 12-8 12 0" fill="none" stroke="#1c6fb0" stroke-width="1.500"/><path d="M2 6h24v22H2z" fill="#1d99f3"/><circle cx="9" cy="8" r="1.200" fill="#0b4f85"/><circle cx="19" cy="8" r="1.200" fill="#0b4f85"/><path d="M15 14l3 3-3 3" fill="none" stroke="#fff" stroke-width="2"/><circle cx="10" cy="15" r="1" fill="#cfe9ff"/><circle cx="10" cy="19" r="1.200" fill="#cfe9ff"/><circle cx="12" cy="23" r="1.200" fill="#cfe9ff"/></svg></button>
  <button class="task" aria-label="Files"><svg viewBox="0 0 30 28"><path d="M0 1h12l3 2h15v12H0z" fill="#2574a3"/><path d="M1 5h28v6H1z" fill="#fff"/><path d="M0 9h10l3-2h17v21H0z" fill="url(#gFolder)"/></svg></button>
  <button class="task" aria-label="Text document"><svg viewBox="0 0 28 28"><path d="M3 0h22v28H3z" fill="#f4f4f4"/><path d="M8 4.500h10M8 7h10M8 9.500h13M8 12h13M8 16.500h13M8 19h10M8 21.500h7" stroke="#888" stroke-width="1" stroke-dasharray="5 1"/></svg></button>
  <button class="task task--open" aria-label="Terminal"><svg viewBox="0 0 28 28"><path d="M0 0h28v28H0z" fill="#4b5357"/><path d="M28 8v20H8z" fill="#383e41"/><path d="M11 8l7 6-7 6" fill="none" stroke="#ccc" stroke-width="1.200"/></svg></button>
  <button class="task task--open" aria-label="Editor"><svg viewBox="0 0 28 28"><path d="M20 0l8 4v20l-8 4z" fill="#2aa5f2"/><path d="M0 9l2-2 18 15v6zM0 19l2 2L20 6V0z" fill="#0c7fd0"/></svg></button>
  <button class="task task--active" aria-label="Innovus"><svg><use href="#i-x11"/></svg></button>
  <div class="tray">
    <svg viewBox="0 0 18 18"><path d="M3 13h12l-2-2V7c0-5-8-5-8 0v4zM7 15h4M9 2v2" /><path d="M3 2L1 5M15 2l2 3M5 2L3 6M13 2l2 4" stroke-width=".8"/></svg>
    <svg viewBox="0 0 18 18"><circle cx="8.500" cy="8.500" r="7.500"/><path d="M8.500 3l4.500 4.500h-2.500V14h-4V7.500H4z" fill="#fff" stroke="none"/><circle cx="13.500" cy="14" r="3.200" fill="#3daee9" stroke="none"/></svg>
    <svg viewBox="0 0 18 18"><path d="M3 3h12v13H3zM5 8h8M5 11h7M5 14h4"/><path d="M5 1h8v4H5z" fill="#fff"/></svg>
    <svg viewBox="0 0 18 18"><path d="M1 6h3v6H1zM5 6l5-5v16l-5-5z" fill="#fff" stroke="none"/><path d="M12 5c2 2 2 6 0 8M14 2c4 4 4 10 0 14" stroke="#777"/><path d="M2 1l15 16" stroke="#da4453" stroke-width="1.300"/></svg>
    <svg viewBox="0 0 18 18"><path d="M3 12l6-6 6 6"/></svg>
  </div>
  <div class="clock"><time>11:03 AM</time><span>8/21/25</span></div>
  <button class="desk" aria-label="Show desktop"></button>
</footer>
<script src="die.js"></script>
</body>
</html>
```
FILE: styles.css
```css
* { box-sizing: border-box; }
body { margin: 0; height: 100vh; display: flex; flex-direction: column; overflow: hidden; background: #efefef; color: #1b1b1b; font: 13px/18px "Noto Sans", sans-serif; }
button { margin: 0; padding: 0; border: 0; background: none; color: inherit; font: inherit; }
input { margin: 0; font: inherit; color: inherit; }
ul { margin: 0; padding: 0; list-style: none; }
u { text-underline-offset: 3px; text-decoration-thickness: 1px; }
i { flex: none; }
.sprite { position: absolute; width: 0; height: 0; }

.titlebar { flex: none; height: 28px; display: flex; align-items: center; padding: 0 5px 3px 6px; background: #dee0e2; border-bottom: 1px solid #cfcfcf; }
.titlebar__icon { flex: none; width: 16px; height: 16px; }
.titlebar__text { flex: 1; margin: 0; padding-left: 46px; font-size: 14px; font-weight: 400; line-height: 20px; text-align: center; white-space: nowrap; color: #2e3236; }
.titlebar__controls { display: flex; gap: 12px; }
.titlebar__controls svg { display: block; width: 12px; height: 12px; fill: none; stroke: #33373b; stroke-width: 1.2; }

.menubar { flex: none; height: 31px; display: flex; align-items: center; border-bottom: 4px solid #d40000; background: #f4f4f4; padding: 0 3px; }
.menubar__items { flex: 1; display: flex; padding-bottom: 2px; }
.menubar__items button { padding: 0 6px; }
.menubar__items button:nth-child(n+3) { margin-right: 1px; }
.menubar__items button:nth-child(n+6) { margin-right: 0; }
.menubar__items button:disabled { color: #9a9a9a; }
.help { width: 111px; height: 24px; display: flex; align-items: center; gap: 10px; border: 1px solid #ccc; border-top: 1px solid #777; border-radius: 3px; background: #fff; }
.help svg { flex: none; width: 12px; height: 12px; }
.help input { width: 80px; border: 0; padding: 0; background: none; outline: 0; }
::placeholder { color: #8f8f8f; opacity: 1; }
.brand { padding-left: 5px; width: 78px; font-size: 17px; line-height: 20px; font-weight: 700; color: #2a2a2a; }
.brand__a { position: relative; }
.brand__a::before { content: ""; position: absolute; left: 2px; right: 2px; top: 4px; height: 2px; background: #e33; }

.tabs { flex: none; height: 30px; display: flex; align-items: flex-end; padding-bottom: 2px; background: linear-gradient(#efefef 28px, #fff 28px); }
.tabs__tab { height: 24px; width: 61px; border-top: 2px solid #d40000; border-left: 1px solid #aaa; border-right: 1px solid #aaa; background: #f3f3f3; }
.tabs__add { width: 23px; height: 23px; margin-left: 1px; border: 1px solid #b5b5b5; border-radius: 4px; background: linear-gradient(#fdfdfd, #c9c9c9); display: grid; place-items: center; }
.tabs__add svg { width: 14px; height: 14px; }

.toolbar { flex: none; height: 30px; display: flex; padding-left: 2px; background: #dcdcdc; }
.group { display: flex; align-items: center; background: linear-gradient(#e6e6e6, #b9b9b9); border-bottom: 1px solid #8a8a8a; border-right: 1px solid #a0a0a0; border-radius: 0 0 3px 3px; }
.group--fill { flex: 1; }
.grip { width: 7px; height: 18px; background: repeating-linear-gradient(90deg, transparent 0 1px, #8a8a8a 1px 2px) right / 6px 100% no-repeat; }
.tool { flex: none; width: 31px; height: 27px; display: grid; place-items: center; }
.tool svg { width: 20px; height: 20px; }
.tool--wide svg { width: 22px; height: 21px; }
.tool--big svg { width: 24px; height: 24px; }
.tool--sel { justify-items: start; padding-left: 3px; }
.tool--sel svg { width: 22px; height: 26px; }
.tool--on { border: 1px solid #000; border-radius: 4px; background: #cfcfcf; }
.drop { flex: none; width: 10px; height: 27px; display: grid; place-items: center; }
.drop::before { content: ""; border: 4px solid transparent; border-top-color: #c40000; border-bottom: 0; }
.drop--on { border: 1px solid #000; border-radius: 3px; }
.drop--off::before { border: 0; width: 7px; height: 1px; background: #888; }
.sep { width: 3px; height: 18px; border-left: 1px solid #777; }
.spring { flex: 1; }

.work { flex: 1; min-height: 0; display: flex; }
.side { flex: none; width: 43px; padding: 5px 0 0 2px; background: linear-gradient(90deg, #ececec 2px, #e2e2e2 4px, #b9b9b9); border-right: 1px solid #a5a5a5; }
.side__grip { display: block; width: 33px; height: 6px; margin-left: 4px; background: repeating-linear-gradient(#8a8a8a 0 1px, transparent 1px 2px); }
.side__row { height: 30px; display: flex; align-items: center; justify-content: space-between; }
.side__row--first { height: 26px; }
.side__row .drop { width: 9px; }
.side__row--in { padding-left: 4px; }
.side__net { display: flex; flex-direction: column; align-items: center; width: 30px; font: 700 13px/14px "DejaVu Sans", sans-serif; color: #000; }
.side__net svg { width: 22px; height: 6px; }
.side__snap { width: 31px; font: 700 10px/14px "DejaVu Sans", sans-serif; color: #223; }
.side__text { width: 30px; font: 700 27px/28px "DejaVu Sans", sans-serif; color: #2d2d2d; }

.canvas { flex: 1; min-width: 0; position: relative; background: #000; overflow: hidden; }
.canvas__die { position: absolute; inset: 0; width: 100%; height: 100%; font: 12px "Noto Sans", sans-serif; }
.canvas__palette { position: absolute; top: 0; right: 0; width: 23px; height: 25px; background: #ececec; border: 1px solid #bbb; display: grid; place-items: center; }
.canvas__palette svg { width: 18px; height: 18px; }
.minimap { position: absolute; right: 0; bottom: 1px; border: 2px solid #888; border-right-width: 1px; width: 114px; height: 113px; background: #000; }
.minimap svg { display: block; width: 100%; height: 100%; }

.panel { flex: none; width: 213px; display: flex; flex-direction: column; border-left: 6px solid #cdcdd2; padding-bottom: 4px; background: #f0f0f0; }
.pill { border: 1px solid #8e8e8e; border-radius: 12px; background: linear-gradient(#fff, #d9d9d9 60%, #bdbdbd); height: 23px; display: flex; align-items: center; justify-content: center; }
.panel__all { flex: none; align-self: flex-start; width: 82px; margin-bottom: 2px; }
.list { flex: 1; min-height: 0; display: flex; border: 2px solid #2c2c2c; border-width: 2px 1px 1px 3px; border-right-color: #fff; border-bottom-color: #fff; margin-right: 2px; background: #fff; }
.list__main { flex: 1; min-width: 0; overflow: hidden; }
.list__head { height: 22px; display: flex; justify-content: flex-end; align-items: center; background: linear-gradient(#cfcfcf, #9c9c9c); }
.list__head button { width: 18px; height: 19px; border: 1px solid #888; border-radius: 50%; background: linear-gradient(#fff, #cfcfcf); line-height: 16px; }
.tree { padding: 2px 0 0 7px; }
.tree--fav { height: 36px; padding-top: 0; padding-left: 9px; margin-bottom: 1px; background: #dedede; border-bottom: 2px solid #8a8a8a; }
.row { height: 18px; display: flex; align-items: center; padding: 0 3px 0 33px; position: relative; }
.row::before { content: ""; position: absolute; left: 24px; top: 0; bottom: 0; width: 8px; border-left: 1px dotted #777; background: repeating-linear-gradient(90deg, #777 0 1px, transparent 1px 2px) 0 9px / 100% 1px no-repeat; }
.row--end::before { bottom: 8px; }
.row--top { padding-left: 0; }
.row--top::before { display: none; }
.row--top b { flex: 1; margin-left: 7px; color: #000; }
.box { width: 9px; height: 9px; border: 1px solid #555; background: linear-gradient(#222, #222) center / 5px 1px no-repeat #fff; }
.dot { width: 10px; height: 10px; margin-left: 4px; border: 1px solid #cfcfcf; border-radius: 50%; background: #fff; }
.dot--pink { background: #ffc0cb; }
.name { flex: 1; min-width: 0; overflow: hidden; white-space: nowrap; color: #1b1b1b; }
.sw { width: 16px; height: 16px; margin: 0 1px 0 2px; }
.sw--white { background: #fff; }
.sw--cyan { border: 2px solid #0ff; }
.sw--orange { border: 2px solid #ffa500; }
.sw--blue { border: 2px solid #00f; }
.sw--gray { border: 2px solid #888; }
.sw--pink { border: 1px solid #ffc0cb; background: radial-gradient(#ffc0cb 1px, transparent 1px) 0 0 / 7px 7px; }
.sw--hatch { border: 1px solid #eed21c; background: repeating-linear-gradient(90deg, #f3e48a 0 1px, #fff 1px 2px); }
input[type="checkbox"] { flex: none; appearance: none; position: relative; width: 12px; height: 12px; background: linear-gradient(#fff, #d6d6d6); border-bottom: 1px solid #777; border-right: 1px solid #999; }
.row input + input { margin-left: 4px; }
.row input:nth-of-type(1):last-child { margin-right: 16px; }
input[type="checkbox"]:checked::before { content: ""; position: absolute; inset: 1px 0 0 1px; background: #c80000; clip-path: polygon(0 35%, 22% 35%, 38% 60%, 85% 0, 100% 12%, 42% 95%, 30% 95%); }
.partial::before { content: ""; position: absolute; left: 4px; top: 4px; width: 5px; height: 4px; background: #c80000; }
.scroll { flex: none; width: 16px; display: flex; flex-direction: column; }
.scroll__btn { height: 16px; background: linear-gradient(#d8d8d8, #b4b4b4); border-bottom: 1px solid #555; }
.scroll__btn svg { display: block; width: 14px; height: 14px; margin: auto; fill: #e4e4e4; stroke: #fff; }
.scroll__track { flex: 1; display: flex; flex-direction: column; justify-content: flex-end; background: #929292; }
.scroll__thumb { height: 24%; border: 1px solid #6d6d6d; border-radius: 6px; background: repeating-linear-gradient(#777 0 1px, transparent 1px 2px) center / 6px 9px no-repeat, linear-gradient(90deg, #c8c8c8, #b0b0b0); }
.radio { display: flex; align-items: center; gap: 6px; height: 30px; padding-top: 2px; }
.radio input { appearance: none; width: 12px; height: 12px; border: 1px solid #888; border-radius: 50%; background: linear-gradient(#fff, #d9d9d9); }
.radio input:checked { background: radial-gradient(#c80000 3px, #f4f4f4 4px); }
.speed { display: flex; align-items: center; height: 32px; justify-content: space-between; padding-right: 8px; }
.speed__slide { width: 84px; margin-left: 6px; }
.speed input[type="range"] { appearance: none; display: block; width: 84px; height: 16px; background: linear-gradient(#c5c5c5, #c5c5c5) center / 100% 1px no-repeat; }
.speed input[type="range"]::-webkit-slider-thumb { appearance: none; width: 9px; height: 14px; border: 1px solid #999; border-radius: 3px; background: linear-gradient(#d00, #d00) center / 2px 7px no-repeat #f4f4f4; }
.speed__ticks { display: flex; gap: 17px; padding-left: 23px; }
.speed__ticks i { width: 1px; height: 5px; background: #aaa; }
.speed__label { color: #8f8f8f; }

.cmd { flex: none; height: 25px; display: flex; align-items: center; padding: 0 0 1px 2px; background: linear-gradient(#dedede, #b9b9b9); white-space: nowrap; }
.cmd .grip { margin-right: 1px; }
.pill--menu { width: 99px; margin-right: 2px; padding: 0 7px 0 4px; }
.pill--menu + .pill--menu { margin-right: 0; }
.pill--menu span { flex: 1; }
.pill--menu i { border: 4px solid transparent; border-left: 5px solid #c40000; border-right: 0; }
.field { height: 24px; border: 0; border-radius: 2px; padding: 0 4px; background: #fff; }
.field--grow { flex: 1; min-width: 0; }
.cmd__append { display: flex; align-items: center; gap: 5px; padding: 0 75px 0 2px; }
.field--coords { width: 76px; margin: 0 7px; }
.field--radius { width: 40px; margin: 0 1px 0 8px; }
.cmd__goto { width: 48px; }

.status { flex: none; height: 30px; display: flex; padding: 2px 0 2px 2px; gap: 3px; border-bottom: 1px solid #111; }
.status__q { width: 25px; height: 24px; border: 1px solid #000; border-width: 1px 2px 2px 1px; background: #fff; font-weight: 700; }
.status__box { flex: 1; display: flex; justify-content: space-between; align-items: center; padding: 2px 4px 0 5px; margin-right: 4px; border-top: 1px solid #555; border-left: 1px solid #555; background: #fff; }
.status__right { display: flex; color: #5f5f5f; }
.status__sel { margin: 0 10px 0 4px; color: #5f8fd0; }
.status__mem { color: #43bcc4; }

.taskbar { flex: none; height: 49px; display: flex; align-items: stretch; background: #2a2e33; color: #fcfcfc; }
.task { width: 56px; margin-right: 2px; display: grid; place-items: center; border-top: 2px solid transparent; }
.task:first-child { width: 50px; }
.task svg { width: 32px; height: 28px; }
.task--open { background: #45484c; border-color: #65686b; }
.task--active { background: #2f6485; border-color: #3daee9; }
.tray { margin-left: auto; display: flex; align-items: center; gap: 14px; }
.tray svg { width: 18px; height: 18px; fill: none; stroke: #fcfcfc; stroke-width: 1.3; }
.clock { display: flex; flex-direction: column; align-items: center; justify-content: center; padding: 0 22px 0 12px; font-size: 14px; line-height: 16px; }
.clock time { font-size: 18px; line-height: 22px; }
.desk { align-self: center; width: 26px; height: 26px; margin-right: 12px; border: 1px solid #fcfcfc; background: linear-gradient(#fcfcfc, #fcfcfc) center 20px / 18px 1px no-repeat; }
```
FILE: die.js
```js
// Draws the floorplan: standard-cell rows, power stripes, rulers and pins.
(function () {
  var svg = document.getElementById('die');
  var NS = 'http://www.w3.org/2000/svg';
  var left = 389, top = 56, right = 762, bottom = 427;

  function path(color, d) {
    var p = document.createElementNS(NS, 'path');
    p.setAttribute('fill', color);
    p.setAttribute('shape-rendering', 'crispEdges');
    p.setAttribute('d', d);
    svg.appendChild(p);
  }
  function r(x, y, w, h) { return 'M' + x + ' ' + y + 'h' + w + 'v' + h + 'h-' + w + 'z'; }
  function label(x, y, s) {
    var t = document.createElementNS(NS, 'text');
    t.setAttribute('x', x);
    t.setAttribute('y', y);
    t.setAttribute('fill', '#ffff00');
    t.textContent = s;
    svg.appendChild(t);
  }

  var i, k, x, y, d;
  var gray = r(left, top, right - left, 5) + r(left, top, 1, bottom - top) + r(left, bottom - 3, right - left, 2);
  var blue = '', holes = '';
  for (i = 0; i < 95; i++) {
    var exact = 61 + 3.815 * i;
    y = Math.round(exact);
    var frac = exact - Math.floor(exact);
    var thick = frac >= 0.12 && frac < 0.5 ? 2 : 1;
    if (y > bottom - 5) break;
    blue += r(left + 1, y, right - left - 2, thick);
    gray += r(left + 1, y + thick, i % 2 ? 12 : 9, 1) + r(left + 3, y + thick + 1, 10, 1);
    gray += r(right - 12, y + thick, 11, 4 - thick);
    holes += r(right - 8, y + thick, 2, 1) + r(right - 4, y + thick, 2, 1) + r(left + 2, y + thick, 1, 1) + r(left + 8, y + thick, 1, 1);
  }
  path('#8e8e8e', gray);
  path('#000000', holes);
  path('#0000ff', blue);
  path('#8e8e8e', r(right - 12, top + 5, 3, bottom - top - 8));

  var red = '', dots = '';
  for (i = 0; i < 14; i++) {
    x = left + 5 + Math.round(26.48 * i);
    var w = i % 2 ? 7 : 6;
    red += r(x, top, 1, bottom - top) + r(x + 2, top, 2, bottom - top) + r(x + w - 1, top, 1, bottom - top);
    red += r(x, top, w, 1) + r(x, bottom - 2, w, 2);
    for (y = top + 8; y < bottom - 4; y += 9) {
      red += r(i % 2 ? x + 4 : x + 1, y, 1, 1) + r(i % 2 ? x + 5 : x + 1, y + 1, 1, 1);
    }
    dots += r(x + 1, top + 1, 1, 1) + r(x + 4, top + 2, 1, 1);
  }
  path('#a52a2a', red);
  path('#8e8e8e', dots);

  var strapY = [92, 139, 185, 232, 279, 326, 372, 419];
  var under = '', orange = '';
  strapY.forEach(function (sy, n) {
    var h = n % 2 ? 6 : 7, mid = n % 2 ? 2 : 3;
    if (n === 6) mid = 2;
    under += r(left + 13, sy, right - left - 25, h);
    orange += r(left + 1, sy, right - left - 1, 1) + r(left + 1, sy + mid, right - left - 1, 2) + r(left + 1, sy + h - 1, right - left - 1, 1);
    orange += r(left + 1, sy, 3, h);
    for (x = left + 6; x < right - 2; x += 8) {
      orange += r(x + n % 3, sy + 1, 1, 1) + r(x + 4, sy + h - 2, 1, 1);
      if (mid === 3) orange += r(x + n % 3 - 1, sy + 2, 1, 1);
    }
  });
  path('#000000', under);
  // Stripes stay visible between the strap edges.
  var over = '';
  strapY.forEach(function (sy, n) {
    for (i = 0; i < 14; i++) {
      x = left + 5 + Math.round(26.48 * i);
      over += r(x, sy, 1, 6) + r(x + 2, sy, 2, 6) + r(x + 5, sy, 1, 6);
    }
  });
  path('#a52a2a', over);
  path('#ffa500', orange);

  // Pin groups.
  path('#f0d818', 'M555 45h42l-2 11h-38z' + r(762, 226, 11, 34) + 'M378 422l3-4h6l3 3v3l-3 3h-6z');
  d = '';
  for (x = 558; x < 594; x += 4) d += r(x, 53, 1, 3);
  for (y = 228; y < 258; y += 4) d += r(770, y, 3, 1);
  path('#8e8e5a', d);
  path('#00cc00', r(560, 56, 34, 3));

  // Rulers.
  d = r(761, 57, 1, 371) + r(390, 427, 373, 1);
  for (k = 0; k <= 34; k++) {
    d += r(762, 427 - Math.round(10.6 * k), k % 5 ? 4 : 8, 1);
    d += r(390 + Math.round(10.6 * k), 427, 1, k % 5 ? 5 : 9);
  }
  path('#8e8e5a', r(762, 57, 1, 370));
  path('#ffff00', d);

  label(780, 34, 'total=139.788');
  label(742, 47, '69.840');
  label(771, 169, '50');
  label(771, 434, '69.948');
})();
```
